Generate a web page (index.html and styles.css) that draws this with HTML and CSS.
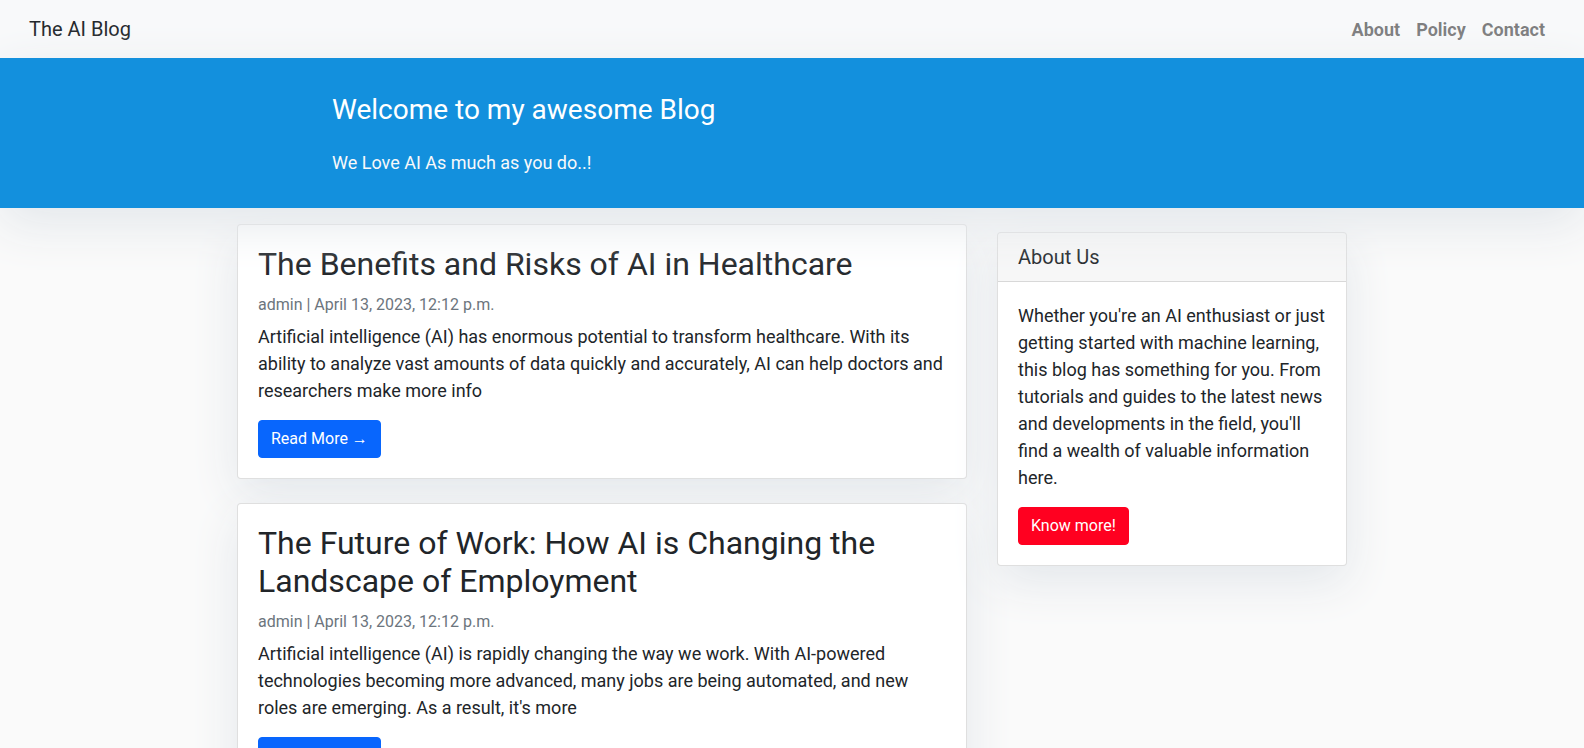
FILE: index.html
```html
<!DOCTYPE html>
<html lang="en">
<head>
<meta charset="utf-8">
<title>The AI Blog</title>
<link rel="stylesheet" href="styles.css">
</head>
<body>
<nav class="navbar">
  <div class="navbar-inner">
    <a class="brand" href="#">The AI Blog</a>
    <ul class="nav">
      <li><a class="nav-link" href="#">About</a></li>
      <li><a class="nav-link" href="#">Policy</a></li>
      <li><a class="nav-link" href="#">Contact</a></li>
    </ul>
  </div>
</nav>

<header class="masthead">
  <div class="container">
    <div class="row">
      <div class="masthead-col">
        <h3 class="site-heading">Welcome to my awesome Blog</h3>
        <p class="site-sub">We Love AI As much as you do..!</p>
      </div>
    </div>
  </div>
</header>

<div class="container">
  <div class="row">
    <main class="col-main">
      <article class="card post">
        <div class="card-body">
          <h2 class="card-title">The Benefits and Risks of AI in Healthcare</h2>
          <p class="meta">admin | April 13, 2023, 12:12 p.m.</p>
          <p class="card-text">Artificial intelligence (AI) has enormous potential to transform healthcare. With its ability to analyze vast amounts of data quickly and accurately, AI can help doctors and researchers make more info</p>
          <a class="btn btn-primary" href="#">Read More &rarr;</a>
        </div>
      </article>
      <article class="card post">
        <div class="card-body">
          <h2 class="card-title">The Future of Work: How AI is Changing the Landscape of Employment</h2>
          <p class="meta">admin | April 13, 2023, 12:12 p.m.</p>
          <p class="card-text">Artificial intelligence (AI) is rapidly changing the way we work. With AI-powered technologies becoming more advanced, many jobs are being automated, and new roles are emerging. As a result, it's more</p>
          <a class="btn btn-primary" href="#">Read More &rarr;</a>
        </div>
      </article>
    </main>
    <aside class="col-side">
      <div class="card side-card">
        <h5 class="card-header">About Us</h5>
        <div class="card-body">
          <p class="card-text side-text">Whether you're an AI enthusiast or just getting started with machine learning, this blog has something for you. From tutorials and guides to the latest news and developments in the field, you'll find a wealth of valuable information here.</p>
          <a class="btn btn-danger" href="#">Know more!</a>
        </div>
      </div>
    </aside>
  </div>
</div>
</body>
</html>
```
FILE: styles.css
```css
* { box-sizing: border-box; }

html, body { margin: 0; padding: 0; }

body {
  font-family: Roboto, "Liberation Sans", Arial, sans-serif;
  font-size: 18px;
  line-height: 1.5;
  color: #212529;
  background-color: #fafafa;
}

a { text-decoration: none; }

/* Navbar */
.navbar {
  background-color: #f8f9fa;
  box-shadow: 0 4px 2px -2px rgba(0, 0, 0, 0.1);
  padding: 7.5px 16px;
  position: relative;
}
.navbar-inner {
  display: flex;
  align-items: center;
  justify-content: space-between;
  padding: 0 15px 0 13px;
}
.brand {
  font-size: 20px;
  line-height: 30px;
  padding: 5px 0;
  color: #212529;
}
.nav {
  display: flex;
  list-style: none;
  margin: 0;
  padding: 0;
}
.nav-link {
  display: block;
  padding: 8px;
  font-weight: 700;
  color: rgba(0, 0, 0, 0.52);
  line-height: 27px;
}

/* Masthead */
.masthead {
  background: #1390dd;
  padding-top: 19px;
  padding-bottom: 16.5px;
  box-shadow: 0 16px 48px #e3e7eb;
  position: relative;
}
.container {
  width: 1140px;
  margin: 0 auto;
  padding: 0 15px;
}
.masthead-col {
  flex: 0 0 83.3333%;
  max-width: 83.3333%;
  margin: 0 auto;
  padding: 0 15px;
}
.site-heading {
  margin: 16px 0 22px;
  font-size: 28px;
  font-weight: 400;
  line-height: 1.2;
  color: #fff;
}
.site-sub {
  margin: 0 0 16px;
  color: #f8f9fa;
}

/* Layout */
.row {
  display: flex;
  margin: 0 -15px;
  align-items: flex-start;
}
.col-main {
  flex: 0 0 66.6667%;
  max-width: 66.6667%;
  padding: 0 15px;
  margin-top: 16px;
}
.col-side {
  flex: 0 0 33.3333%;
  max-width: 33.3333%;
  padding: 0 15px;
}

/* Cards */
.card {
  background: #fff;
  border: 1px solid rgba(0, 0, 0, 0.125);
  border-radius: 4px;
  box-shadow: 0 16px 48px #e3e7eb;
}
.post { margin-bottom: 24px; }
.side-card { margin: 24px 0; }

.card-body { padding: 20px; }

.card-title {
  margin: 0 0 12px;
  font-size: 32px;
  font-weight: 400;
  line-height: 1.2;
}
.meta {
  margin: 0 0 8px;
  font-size: 16px;
  line-height: 1.2;
  color: #6c757d;
}
.card-text {
  margin: 0 0 16px;
}
.card-header {
  margin: 0;
  padding: 12px 20px;
  font-size: 20px;
  font-weight: 400;
  line-height: 1.2;
  background-color: rgba(0, 0, 0, 0.03);
  border-bottom: 1px solid rgba(0, 0, 0, 0.125);
  border-radius: 3px 3px 0 0;
}

/* Buttons */
.btn {
  display: inline-block;
  padding: 6px 12px;
  font-size: 16px;
  line-height: 24px;
  border: 1px solid transparent;
  border-radius: 4px;
  color: #fff;
}
.btn-primary {
  background-color: #0866fd;
  border-color: #0866fd;
}
.btn-danger {
  background-color: #ff0020;
  border-color: #ff0020;
}
```
